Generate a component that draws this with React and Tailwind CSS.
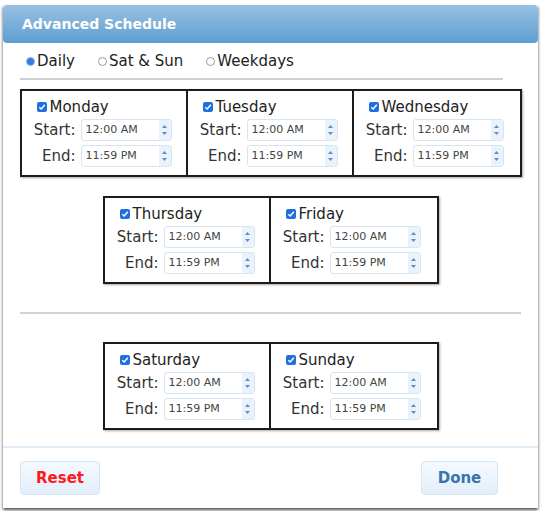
import { useState } from 'react'

const font = { fontFamily: '"DejaVu Sans", Verdana, sans-serif' }

function Radio({ checked, label, onClick }) {
  return (
    <label className="flex items-center cursor-pointer" onClick={onClick}>
      {checked ? (
        <span className="w-[9px] h-[9px] rounded-full bg-[#2f7de1] border border-[#8ab8ee] mr-[2px]" />
      ) : (
        <span className="w-[9px] h-[9px] rounded-full bg-white border border-[#9a9a9a] mr-[2px]" />
      )}
      <span className="text-[15px] leading-[18px] text-[#222]">{label}</span>
    </label>
  )
}

function TimeInput({ value }) {
  return (
    <div className="flex w-[91px] h-[22px] rounded-[3px] border border-[#d6e5f5] bg-white">
      <div className="flex-1 flex items-center pl-[4px] text-[11px] text-[#444]">{value}</div>
      <div className="w-[12px] flex flex-col items-center justify-center gap-[4px] bg-[#eaf2fb] rounded-r-[3px]">
        <svg width="5" height="3" viewBox="0 0 5 3"><path d="M0 3 L2.5 0 L5 3 Z" fill="#5b8fc7" /></svg>
        <svg width="5" height="3" viewBox="0 0 5 3"><path d="M0 0 L2.5 3 L5 0 Z" fill="#5b8fc7" /></svg>
      </div>
    </div>
  )
}

function DayBox({ day }) {
  return (
    <div className="w-[166px] h-full pt-[7px] bg-white">
      <div className="flex items-center h-[18px] pl-[15px]">
        <span className="w-[10px] h-[10px] rounded-[2px] bg-[#1f6fe0] flex items-center justify-center mr-[3px]">
          <svg width="8" height="8" viewBox="0 0 8 8">
            <path d="M1.3 4.2 L3.2 6 L6.8 1.8" stroke="white" strokeWidth="1.5" fill="none" />
          </svg>
        </span>
        <span className="text-[15px] leading-[18px] text-[#222]">{day}</span>
      </div>
      <div className="flex items-center mt-[3px]">
        <span className="w-[59px] pr-[5px] text-right text-[15px] text-[#333]">Start:</span>
        <TimeInput value="12:00 AM" />
      </div>
      <div className="flex items-center mt-[3px]">
        <span className="w-[59px] pr-[5px] text-right text-[15px] text-[#333]">End:</span>
        <TimeInput value="11:59 PM" />
      </div>
    </div>
  )
}

function DayRow({ days }) {
  return (
    <div className="flex justify-center">
      <div className="flex h-[88px] border-2 border-[#1c1c1c] divide-x-2 divide-[#1c1c1c] shadow-[1px_1px_2px_rgba(0,0,0,0.35)]">
        {days.map((d) => (
          <DayBox key={d} day={d} />
        ))}
      </div>
    </div>
  )
}

export default function App() {
  const [mode, setMode] = useState('daily')

  return (
    <div className="w-[541px] h-[511px] bg-white pt-[5px] px-[3px]" style={font}>
      <div className="w-[535px] bg-white shadow-[0_2px_3px_rgba(0,0,0,0.7)]">
        <div className="h-[38px] rounded-[4px] bg-gradient-to-b from-[#97c1e3] to-[#5e9ed1] flex items-center pl-[19px]">
          <span className="text-white font-bold text-[14px]">Advanced Schedule</span>
        </div>

        <div className="px-[17px]">
          <div className="flex items-center gap-[23px] mt-[9px] h-[18px] pl-[6px]">
            <Radio checked={mode === 'daily'} label="Daily" onClick={() => setMode('daily')} />
            <Radio checked={mode === 'weekend'} label="Sat & Sun" onClick={() => setMode('weekend')} />
            <Radio checked={mode === 'weekdays'} label="Weekdays" onClick={() => setMode('weekdays')} />
          </div>
          <div className="mt-[8px] h-[2px] bg-[#cfcfcf] mr-[18px]" />

          <div className="mt-[9px]">
            <DayRow days={['Monday', 'Tuesday', 'Wednesday']} />
          </div>
          <div className="mt-[19px]">
            <DayRow days={['Thursday', 'Friday']} />
          </div>
          <div className="mt-[28px] h-[2px] bg-[#d2d2d2]" />
          <div className="mt-[28px]">
            <DayRow days={['Saturday', 'Sunday']} />
          </div>
        </div>

        <div className="mt-[16px] border-t-2 border-[#e2ecf6] px-[17px] pt-[13px] pb-[13px] flex justify-between">
          <button className="w-[80px] h-[34px] rounded-[4px] border border-[#d6e6f5] bg-gradient-to-b from-[#f4f9fe] to-[#e4effa] text-[#ff1a1a] font-bold text-[15px]">
            Reset
          </button>
          <button className="w-[77px] h-[34px] mr-[23px] rounded-[4px] border border-[#d6e6f5] bg-gradient-to-b from-[#f4f9fe] to-[#e4effa] text-[#3a74ab] font-bold text-[15px]">
            Done
          </button>
        </div>
      </div>
    </div>
  )
}
